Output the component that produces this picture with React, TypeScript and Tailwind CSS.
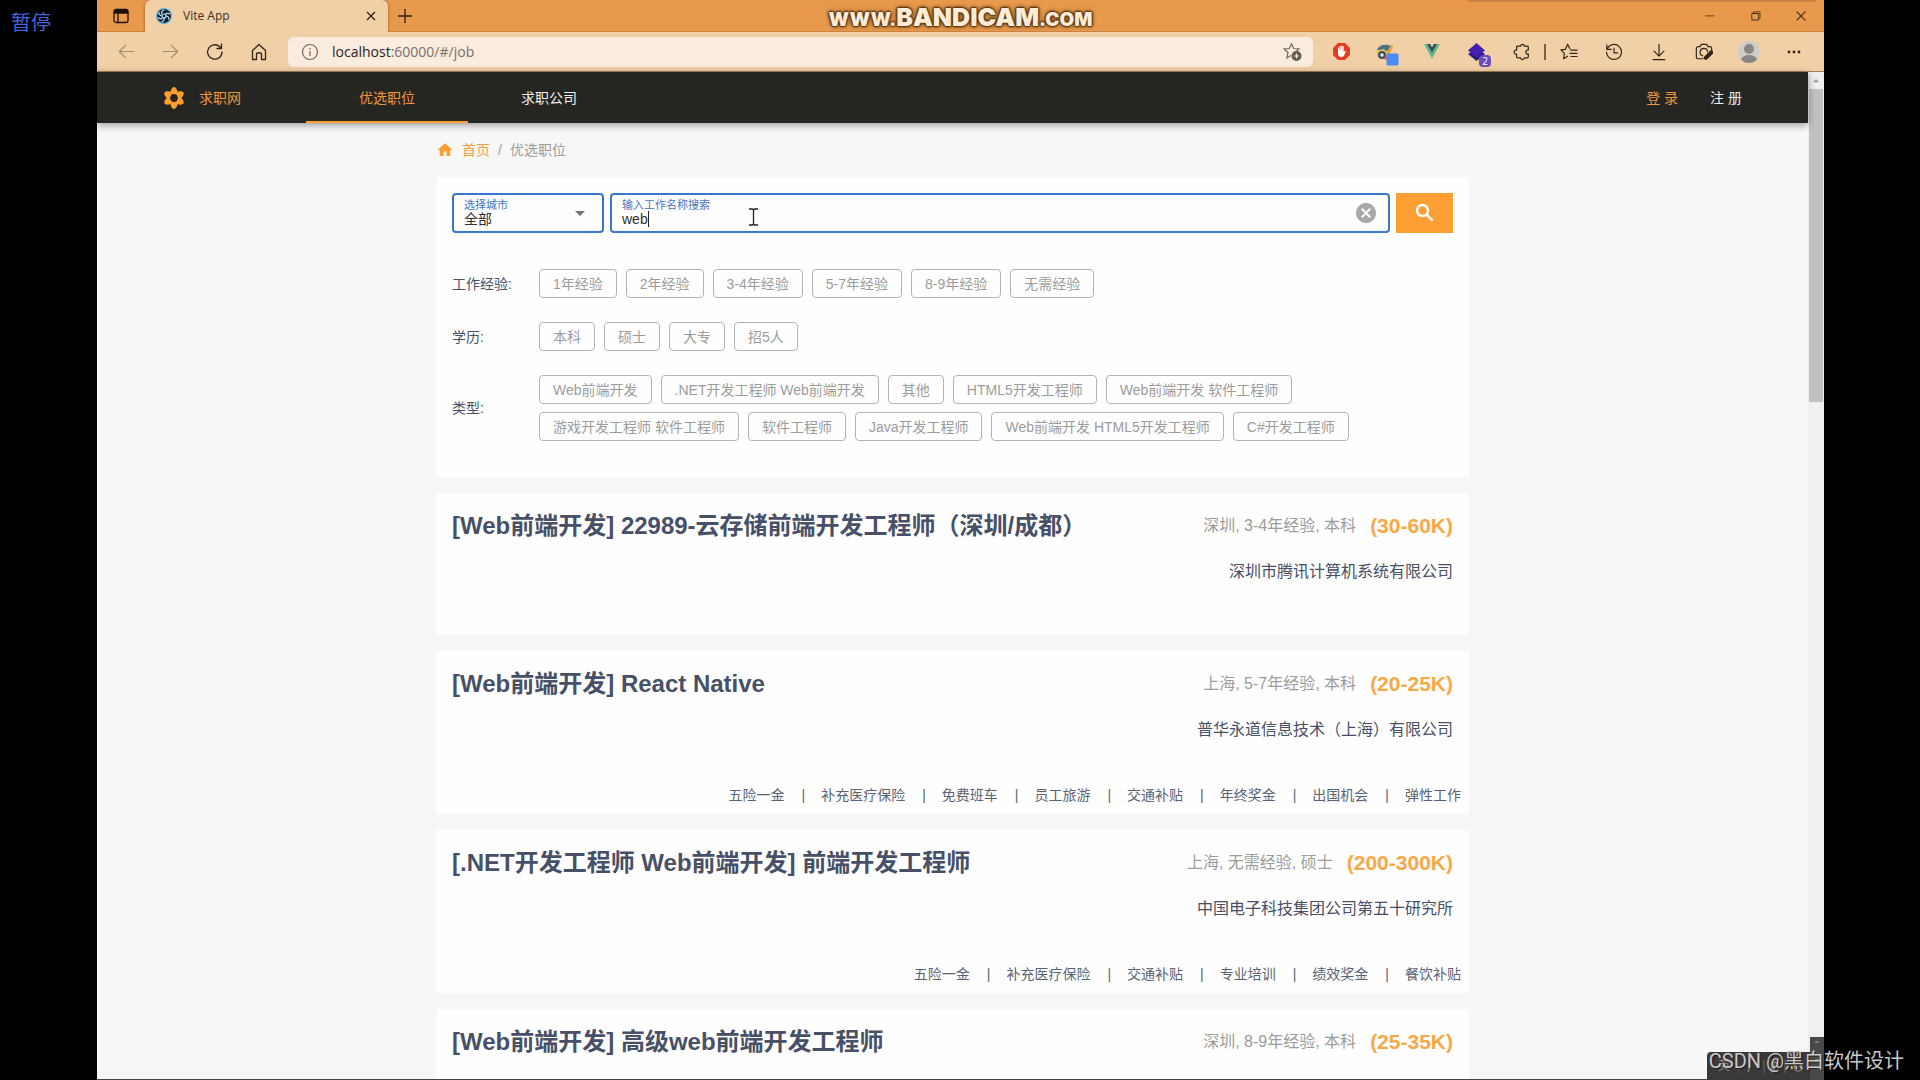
import { type ReactNode } from "react";
import { clsx } from "clsx";
import { MdArrowDropDown, MdArrowDropUp, MdCancel, MdHome } from "react-icons/md";
import {
  VscChromeClose,
  VscChromeMinimize,
  VscChromeRestore,
} from "react-icons/vsc";

interface Job {
  title: string;
  meta: string;
  salary: string;
  company: string;
  benefits: string[];
}

const FILTERS: { label: string; options: string[] }[] = [
  {
    label: "工作经验:",
    options: ["1年经验", "2年经验", "3-4年经验", "5-7年经验", "8-9年经验", "无需经验"],
  },
  { label: "学历:", options: ["本科", "硕士", "大专", "招5人"] },
  {
    label: "类型:",
    options: [
      "Web前端开发",
      ".NET开发工程师 Web前端开发",
      "其他",
      "HTML5开发工程师",
      "Web前端开发 软件工程师",
      "游戏开发工程师 软件工程师",
      "软件工程师",
      "Java开发工程师",
      "Web前端开发 HTML5开发工程师",
      "C#开发工程师",
    ],
  },
];

const JOBS: Job[] = [
  {
    title: "[Web前端开发] 22989-云存储前端开发工程师（深圳/成都）",
    meta: "深圳, 3-4年经验, 本科",
    salary: "(30-60K)",
    company: "深圳市腾讯计算机系统有限公司",
    benefits: [],
  },
  {
    title: "[Web前端开发] React Native",
    meta: "上海, 5-7年经验, 本科",
    salary: "(20-25K)",
    company: "普华永道信息技术（上海）有限公司",
    benefits: [
      "五险一金",
      "补充医疗保险",
      "免费班车",
      "员工旅游",
      "交通补贴",
      "年终奖金",
      "出国机会",
      "弹性工作",
    ],
  },
  {
    title: "[.NET开发工程师 Web前端开发] 前端开发工程师",
    meta: "上海, 无需经验, 硕士",
    salary: "(200-300K)",
    company: "中国电子科技集团公司第五十研究所",
    benefits: ["五险一金", "补充医疗保险", "交通补贴", "专业培训", "绩效奖金", "餐饮补贴"],
  },
  {
    title: "[Web前端开发] 高级web前端开发工程师",
    meta: "深圳, 8-9年经验, 本科",
    salary: "(25-35K)",
    company: "",
    benefits: [],
  },
];

const LOGO_PETALS = [0, 60, 120, 180, 240, 300];

interface ToolButtonProps {
  label: string;
  children: ReactNode;
  className?: string;
}

const ToolButton = ({ label, children, className = "w-[45px]" }: ToolButtonProps) => (
  <button
    type="button"
    aria-label={label}
    className={clsx("flex h-8 shrink-0 items-center justify-center", className)}
  >
    {children}
  </button>
);

// Thin outlined icon on a 20px grid
const Line = ({ children, size = 20 }: { children: ReactNode; size?: number }) => (
  <svg
    width={size}
    height={size}
    viewBox="0 0 20 20"
    fill="none"
    stroke="currentColor"
    strokeWidth="1.3"
    strokeLinecap="round"
    strokeLinejoin="round"
  >
    {children}
  </svg>
);

const TitleBar = () => (
  <div className="relative flex h-8 shrink-0 border-b border-[#c98444] bg-[#e8994b]">
    <div className="flex w-12 shrink-0 items-center justify-center text-[#1d1208]">
      <svg width="16" height="16" viewBox="0 0 16 16" fill="none" stroke="currentColor" strokeWidth="1.3">
        <rect x="1" y="1.5" width="14" height="13" rx="2" />
        <path d="M1.5 2.5h13v2.5h-13z" fill="currentColor" />
        <path d="M5 5v9" />
      </svg>
    </div>
    <div className="-mb-px flex w-[243px] shrink-0 items-center rounded-t-md bg-[#f2d0a7] pr-2 pl-[11px] shadow-[0_0_3px_rgba(110,60,10,0.7)] [clip-path:inset(0_-4px)]">
      <svg width="16" height="16" viewBox="0 0 16 16" className="mr-[11px] shrink-0">
        <circle cx="8" cy="8" r="8" fill="#57aede" />
        <circle cx="8" cy="8" r="6.8" fill="#0f1d2b" />
        <g fill="none" stroke="#c9e6f5" strokeWidth="1.2">
          <circle cx="8" cy="8" r="2" />
          <path d="M8 1.8c-2 1.2-2.8 3-2 4.5M14 6c-2.2-1-4.2-.6-5 .9M13 12c.2-2.4-1-4-2.8-4M5.5 14c2-.9 3-2.7 2.5-4.3M1.8 9.5c1.8 1.6 3.6 1.7 4.7.3M3 3.8c-.4 2 .6 3.7 2.5 4" />
        </g>
      </svg>
      <span className="flex-1 text-xs text-[#3d3126]">Vite App</span>
      <button type="button" aria-label="Close tab" className="flex size-[18px] items-center justify-center">
        <svg width="10" height="10" viewBox="0 0 10 10" stroke="#2b2016" strokeWidth="1.3">
          <path d="M1 1l8 8M9 1l-8 8" />
        </svg>
      </button>
    </div>
    <button type="button" aria-label="New tab" className="flex w-[34px] items-center justify-center">
      <svg width="14" height="14" viewBox="0 0 14 14" stroke="#2b2016" strokeWidth="1.3">
        <path d="M7 0v14M0 7h14" />
      </svg>
    </button>
    <div className="flex-1" />
    <div className="flex text-[#3b2a18]">
      <button type="button" aria-label="Minimize" className="flex w-[46px] items-center justify-center">
        <VscChromeMinimize size={13} />
      </button>
      <button type="button" aria-label="Restore" className="flex w-[46px] items-center justify-center">
        <VscChromeRestore size={13} />
      </button>
      <button type="button" aria-label="Close" className="flex w-[46px] items-center justify-center">
        <VscChromeClose size={14} />
      </button>
    </div>
    {/* Recorder overlay */}
    <div className="absolute top-0 right-2 h-[2px] w-[348px] bg-[#c68344]" />
    <div className="pointer-events-none absolute inset-x-0 top-0 flex h-9 items-center justify-center font-['Inter',sans-serif] font-black text-[#fdebd6] [text-shadow:1px_0_1px_#5c3a14,-1px_0_1px_#5c3a14,0_1px_1px_#5c3a14,0_-1px_1px_#5c3a14,0_0_4px_#5c3a14,0_0_4px_#5c3a14]">
      <p className="flex items-baseline">
        <span className="text-[19px] leading-9">WWW.</span>
        <span className="text-[25px] leading-9">BANDICAM</span>
        <span className="text-[19px] leading-9">.COM</span>
      </p>
    </div>
  </div>
);

const Toolbar = () => (
  <div className="flex h-10 shrink-0 items-center border-b border-[#9d8160] bg-[#f2d0a7] pr-2 pl-[7px] text-[#2e241a]">
    <ToolButton label="Back" className="w-11 text-[#a58a6c]">
      <Line size={19}>
        <path d="M18 10H2.500M9 3.500L2.500 10 9 16.500" />
      </Line>
    </ToolButton>
    <ToolButton label="Forward" className="w-11 text-[#a58a6c]">
      <Line size={19}>
        <path d="M2 10h15.500M11 3.500l6.500 6.500-6.500 6.500" />
      </Line>
    </ToolButton>
    <ToolButton label="Refresh">
      <Line>
        <path d="M17 10a7.200 7.200 0 1 1-2.200-5.200L16.500 6.500M16.500 2v4.500H12" />
      </Line>
    </ToolButton>
    <ToolButton label="Home" className="w-11">
      <Line>
        <path d="M3.500 8.500L10 2.500l6.500 6V17.500h-4V12a1 1 0 0 0-1-1h-3a1 1 0 0 0-1 1v5.500h-4z" />
      </Line>
    </ToolButton>

    <div className="ml-[7px] flex h-[30px] flex-1 items-center rounded-md bg-[#faecdf] pr-[10px] pl-[13px]">
      <svg width="18" height="18" viewBox="0 0 18 18" fill="none" stroke="#75695e" strokeWidth="1.2">
        <circle cx="9" cy="9" r="7.5" />
        <path d="M9 8v5M9 5v1.500" />
      </svg>
      <p className="ml-[13px] flex-1 text-sm text-[#7b7067]">
        <span className="text-[#2a221b]">localhost</span>:60000/#/job
      </p>
      <svg width="20" height="20" viewBox="0 0 20 20" fill="none" stroke="#75695e" strokeWidth="1.2">
        <path d="M8.500 1.500l2.200 5 5.300.4-3.800 3.600.3 1M8.500 1.500l-2.200 5-5.300.4 4 3.600-1.200 5.500 4-2.600" />
        <circle cx="13.5" cy="14" r="5" fill="#5f5a56" stroke="none" />
        <path d="M13.500 11.500v5M11 14h5" stroke="#faecdf" />
      </svg>
    </div>

    <div className="ml-[6px] flex items-center">
      <ToolButton label="Ad blocker">
        <svg width="17" height="17" viewBox="0 0 17 17">
          <path d="M5 0h7l5 5v7l-5 5H5l-5-5V5z" fill="#e23c22" />
          <path
            d="M5 10V4.800q.6-.8 1.200 0V7.500h.3V3.500q.6-.8 1.200 0v4h.3V2.800q.6-.8 1.200 0v4.700h.3V3.500q.6-.8 1.200 0V9l1.300-1.300q1-.1.7.8L11 12.700q-.9 1.300-2.700 1.300Q5 14 5 10z"
            fill="#fff"
          />
        </svg>
      </ToolButton>
      <ToolButton label="Color picker" className="w-[45px] pt-1">
        <svg width="24" height="24" viewBox="0 0 24 24">
          <path d="M2 8a9 7 0 0 1 14-4l-3 5z" fill="#49748c" />
          <path d="M1 9l8-2 4 6-6 4q-5-1-6-8z" fill="#f1c64b" />
          <path d="M17 2l-6 9 3 2 4-8z" fill="#f0a030" />
          <circle cx="7" cy="13" r="4" fill="#33536b" />
          <circle cx="7" cy="13" r="1.8" fill="#f6e5d0" />
          <path d="M8 17l4-4 2 5z" fill="#e2574c" />
          <rect x="11.5" y="11.5" width="12" height="12" rx="1.5" fill="#4b8bf4" />
        </svg>
      </ToolButton>
      <ToolButton label="Vue devtools">
        <svg width="16" height="15" viewBox="0 0 16 15">
          <path d="M0 0h3.500L8 8l4.500-8H16L8 14.500z" fill="#5cb88b" />
          <path d="M3.200 0H6l2 3.500L10 0h2.800L8 8.500z" fill="#33475b" />
        </svg>
      </ToolButton>
      <ToolButton label="Extension, 2 items" className="relative w-[45px]">
        <svg width="17" height="18" viewBox="0 0 17 18">
          <path d="M0 11l8.500-5 8.500 5-8.500 7z" fill="#2c1780" />
          <path d="M0 7.500L8.500 0 17 7.500l-8.500 7z" fill="#451fae" />
        </svg>
        <span className="absolute right-2 bottom-px h-3 w-3 rounded-sm bg-[#6d4bbb] text-center text-[10px] leading-3 text-white">
          2
        </span>
      </ToolButton>
      <ToolButton label="Extensions">
        <Line size={18}>
          <path d="M5 3.500h3.500a2 2 0 1 1 4 0H16a1 1 0 0 1 1 1V8a2.200 2.200 0 1 0 0 4.200v3.300a1 1 0 0 1-1 1h-3.500a2 2 0 1 1-4 0H5a1 1 0 0 1-1-1v-3.300A2.200 2.200 0 1 1 4 8V4.500a1 1 0 0 1 1-1z" />
        </Line>
      </ToolButton>
      <div className="h-4 w-[2px] bg-[#75614c]" />
      <ToolButton label="Favorites">
        <Line size={18}>
          <path d="M11 6.500L8.500 1.500 6 7 1 7.700l3.800 3.800L4 17.500l4.500-2.800M12 8h7M11 11.500h8M12 15h7" />
        </Line>
      </ToolButton>
      <ToolButton label="History">
        <Line size={18}>
          <path d="M2 2v5h5M2.300 6.800A8.300 8.300 0 1 1 1.700 10M10 6v5h4" />
        </Line>
      </ToolButton>
      <ToolButton label="Downloads">
        <Line size={18}>
          <path d="M10 1.500V14M4.500 9l5.500 5.500L15.500 9M3.500 18.500h13" />
        </Line>
      </ToolButton>
      <ToolButton label="Screenshot">
        <Line size={18}>
          <path d="M9 17.500H3.500a2 2 0 0 1-2-2V6a2 2 0 0 1 2-2h2l1.500-2.500h6L14.500 4h2a2 2 0 0 1 2 2v2.500" />
          <path d="M8.500 14.200a4.200 4.200 0 1 1 5.500-4.500" />
          <path d="M18 10.500l-6 6" strokeWidth="4.5" />
        </Line>
      </ToolButton>
      <ToolButton label="Profile">
        <svg width="22" height="22" viewBox="0 0 22 22">
          <circle cx="11" cy="11" r="11" fill="#d0cdc8" />
          <circle cx="11" cy="8" r="5" fill="#888683" />
          <path d="M3 18.500q2-4.500 8-4.500t8 4.500Q16 22 11 22t-8-3.500z" fill="#888683" />
        </svg>
      </ToolButton>
      <ToolButton label="More">
        <svg width="14" height="4" viewBox="0 0 14 4" fill="currentColor">
          <circle cx="2" cy="2" r="1.4" />
          <circle cx="7" cy="2" r="1.4" />
          <circle cx="12" cy="2" r="1.4" />
        </svg>
      </ToolButton>
    </div>
  </div>
);

const NavBar = () => (
  <header className="relative z-10 flex h-[51px] shrink-0 items-stretch bg-[#252522] px-[66px] text-sm text-[#f0f0ee] shadow-[0_2px_8px_rgba(0,0,0,0.4)]">
    <a href="#/" className="flex w-[143px] items-center text-[#f0993a]">
      <svg width="22" height="22" viewBox="-11 -11 22 22" className="mr-[14px] text-[#fd9f2f]">
        {LOGO_PETALS.map((angle) => (
          <path
            key={angle}
            transform={`rotate(${angle})`}
            d="M-3.500-4C-4-6.500-3-9-1.200-10.600Q0-11.500 1.200-10.600C3-9 4-6.500 3.500-4z"
            fill="currentColor"
          />
        ))}
        <circle r="5.3" fill="none" stroke="currentColor" strokeWidth="2.8" />
      </svg>
      求职网
    </a>
    <nav className="flex flex-1">
      <a
        href="#/job"
        className="flex w-[162px] items-center justify-center border-y-2 border-t-transparent border-b-[#fd9f2f] text-[#f0993a]"
      >
        优选职位
      </a>
      <a href="#/company" className="flex w-[162px] items-center justify-center">
        求职公司
      </a>
    </nav>
    <div className="flex items-center gap-8">
      <a href="#/login" className="text-[#f0993a]">
        登 录
      </a>
      <a href="#/register">注 册</a>
    </div>
  </header>
);

const SearchCard = () => (
  <section className="rounded bg-[#fefefe] px-4 pt-4 pb-9">
    <form className="flex h-10 gap-[6px]">
      <div className="relative flex w-[152px] flex-col rounded border-2 border-[#3a76cc] px-[10px] pt-1">
        <label htmlFor="city" className="text-[11px] leading-3 text-[#4576bd]">
          选择城市
        </label>
        <select id="city" className="h-4 w-full appearance-none text-sm leading-4 text-[#2f2f2f] outline-none">
          <option>全部</option>
        </select>
        <MdArrowDropDown
          size={24}
          className="pointer-events-none absolute top-[6px] right-[10px] text-[#757575]"
        />
      </div>
      <div className="relative flex flex-1 items-center rounded border-2 border-[#3a76cc] px-[10px]">
        <div className="flex flex-1 flex-col">
          <label htmlFor="keyword" className="text-[11px] leading-3 text-[#4576bd]">
            输入工作名称搜索
          </label>
          <input
            id="keyword"
            type="text"
            defaultValue="web"
            className="h-4 w-full text-sm leading-4 text-[#2f2f2f] outline-none"
          />
        </div>
        <button type="button" aria-label="清除" className="text-[#a8a8a8]">
          <MdCancel size={24} />
        </button>
        {/* Text caret and mouse pointer */}
        <span className="absolute top-4 left-9 h-4 w-px bg-[#222]" />
        <svg
          width="9"
          height="18"
          viewBox="0 0 9 18"
          fill="none"
          stroke="#222"
          strokeWidth="1.3"
          className="absolute top-[13px] left-[137px]"
        >
          <path d="M0 1h3.500l1 1 1-1H9M0 17h3.500l1-1 1 1H9M4.500 2v14" />
        </svg>
      </div>
      <button
        type="submit"
        aria-label="搜索"
        className="flex w-[57px] items-center justify-center bg-[#fd9f32] text-white"
      >
        <svg width="24" height="24" viewBox="0 0 24 24" fill="none" stroke="currentColor" strokeWidth="2.4">
          <circle cx="9.5" cy="9.5" r="5.5" />
          <path d="M13.800 13.800l5.900 5.900" />
        </svg>
      </button>
    </form>

    <div className="mt-9 flex flex-col gap-6">
      {FILTERS.map((filter) => (
        <div key={filter.label} className="flex items-center">
          <h3 className="w-[87px] shrink-0 text-sm text-[#475066]">{filter.label}</h3>
          <div className="flex flex-wrap gap-x-[9px] gap-y-2">
            {filter.options.map((option) => (
              <button
                key={option}
                type="button"
                className="h-[29px] rounded border border-[#b4b4b4] px-[13px] text-sm text-[#9c9c9c]"
              >
                {option}
              </button>
            ))}
          </div>
        </div>
      ))}
    </div>
  </section>
);

const JobCard = ({ job }: { job: Job }) => (
  <article className="flex min-h-[142px] shrink-0 flex-col rounded bg-[#fefefe] pt-[17px] pb-[9px]">
    <div className="flex items-center justify-between px-4">
      <h2 className="text-2xl font-bold text-[#475066]">{job.title}</h2>
      <p className="flex items-center gap-[14px] text-base text-[#9c9c9c]">
        {job.meta}
        <strong className="text-[21px] leading-6 text-[#f9a847]">{job.salary}</strong>
      </p>
    </div>
    <p className="mt-[18px] h-6 px-4 text-right text-base leading-6 text-[#475066]">{job.company}</p>
    {job.benefits.length > 0 && (
      <ul className="mt-[43px] flex justify-end pr-2 text-sm text-[#5a6375]">
        {job.benefits.map((benefit, i) => (
          <li key={benefit} className="flex">
            {i > 0 && <span className="pr-4 pl-[17px]">|</span>}
            {benefit}
          </li>
        ))}
      </ul>
    )}
  </article>
);

const Scrollbar = () => (
  <div className="flex w-4 shrink-0 flex-col bg-[#f0f0ef]" aria-hidden="true">
    <div className="flex h-[17px] items-center justify-center text-[#a0a0a0]">
      <MdArrowDropUp size={18} />
    </div>
    <div className="mx-px h-[313px] bg-[#c1c1c1]" />
  </div>
);

export default function App() {
  return (
    <div className="relative flex h-screen overflow-hidden bg-black font-['Liberation_Sans','Noto_Sans_CJK_SC',sans-serif]">
      <div className="w-[97px] shrink-0 pt-[9px] pl-[11px] text-xl text-[#4266dd]">暂停</div>

      <div className="flex min-w-0 flex-1 flex-col border-b border-[#444]">
        <div className="font-['Open_Sans','Noto_Sans_CJK_SC',sans-serif]">
          <TitleBar />
          <Toolbar />
        </div>
        <div className="flex min-h-0 flex-1">
          <div className="flex min-w-0 flex-1 flex-col bg-[#f7f7f7]">
            <NavBar />
            <main className="mx-auto flex min-h-0 w-full max-w-[1033px] flex-1 flex-col overflow-hidden">
              <nav aria-label="breadcrumb" className="flex h-[54px] shrink-0 items-center text-sm text-[#9c9c9c]">
                <MdHome size={18} className="mr-2 text-[#fd9f2f]" />
                <a href="#/" className="text-[#efa044]">
                  首页
                </a>
                <span className="px-2">/</span>
                <span>优选职位</span>
              </nav>
              <div className="flex flex-col gap-4">
                <SearchCard />
                {JOBS.map((job) => (
                  <JobCard key={job.title} job={job} />
                ))}
              </div>
            </main>
          </div>
          <Scrollbar />
        </div>
      </div>

      <div className="w-24 shrink-0" />

      {/* Input method bar, sits under the watermark */}
      <div className="absolute right-24 bottom-0 flex items-end">
        <div className="flex h-7 w-[103px] items-center rounded-tl bg-[#3b3938] pl-[11px] text-xs text-[#8d8b89]">
          <span className="w-5">英</span>
          <svg width="72" height="28" viewBox="31 0 72 28" fill="none" stroke="#8d8b89" strokeWidth="1.3">
            <path d="M31 8v13M57 8v13M78 8v13" stroke="#5f5d5b" />
            <path d="M43 15l-2 5M67 9v9M67 9l4 3" />
            <circle cx="65.5" cy="18" r="1.8" />
            <circle cx="91" cy="15" r="4" />
          </svg>
        </div>
        <div className="flex h-[43px] w-[14px] justify-center bg-[#4a4949] pt-1">
          <span className="h-5 w-1 border-y-2 border-dotted border-[#777]" />
        </div>
      </div>
      <p className="absolute right-4 bottom-1 font-['Roboto','Noto_Sans_CJK_SC',sans-serif] text-xl leading-[30px] text-[#c9c9c9] [text-shadow:1px_1px_1px_rgba(0,0,0,0.5)]">
        CSDN @黑白软件设计
      </p>
    </div>
  );
}
